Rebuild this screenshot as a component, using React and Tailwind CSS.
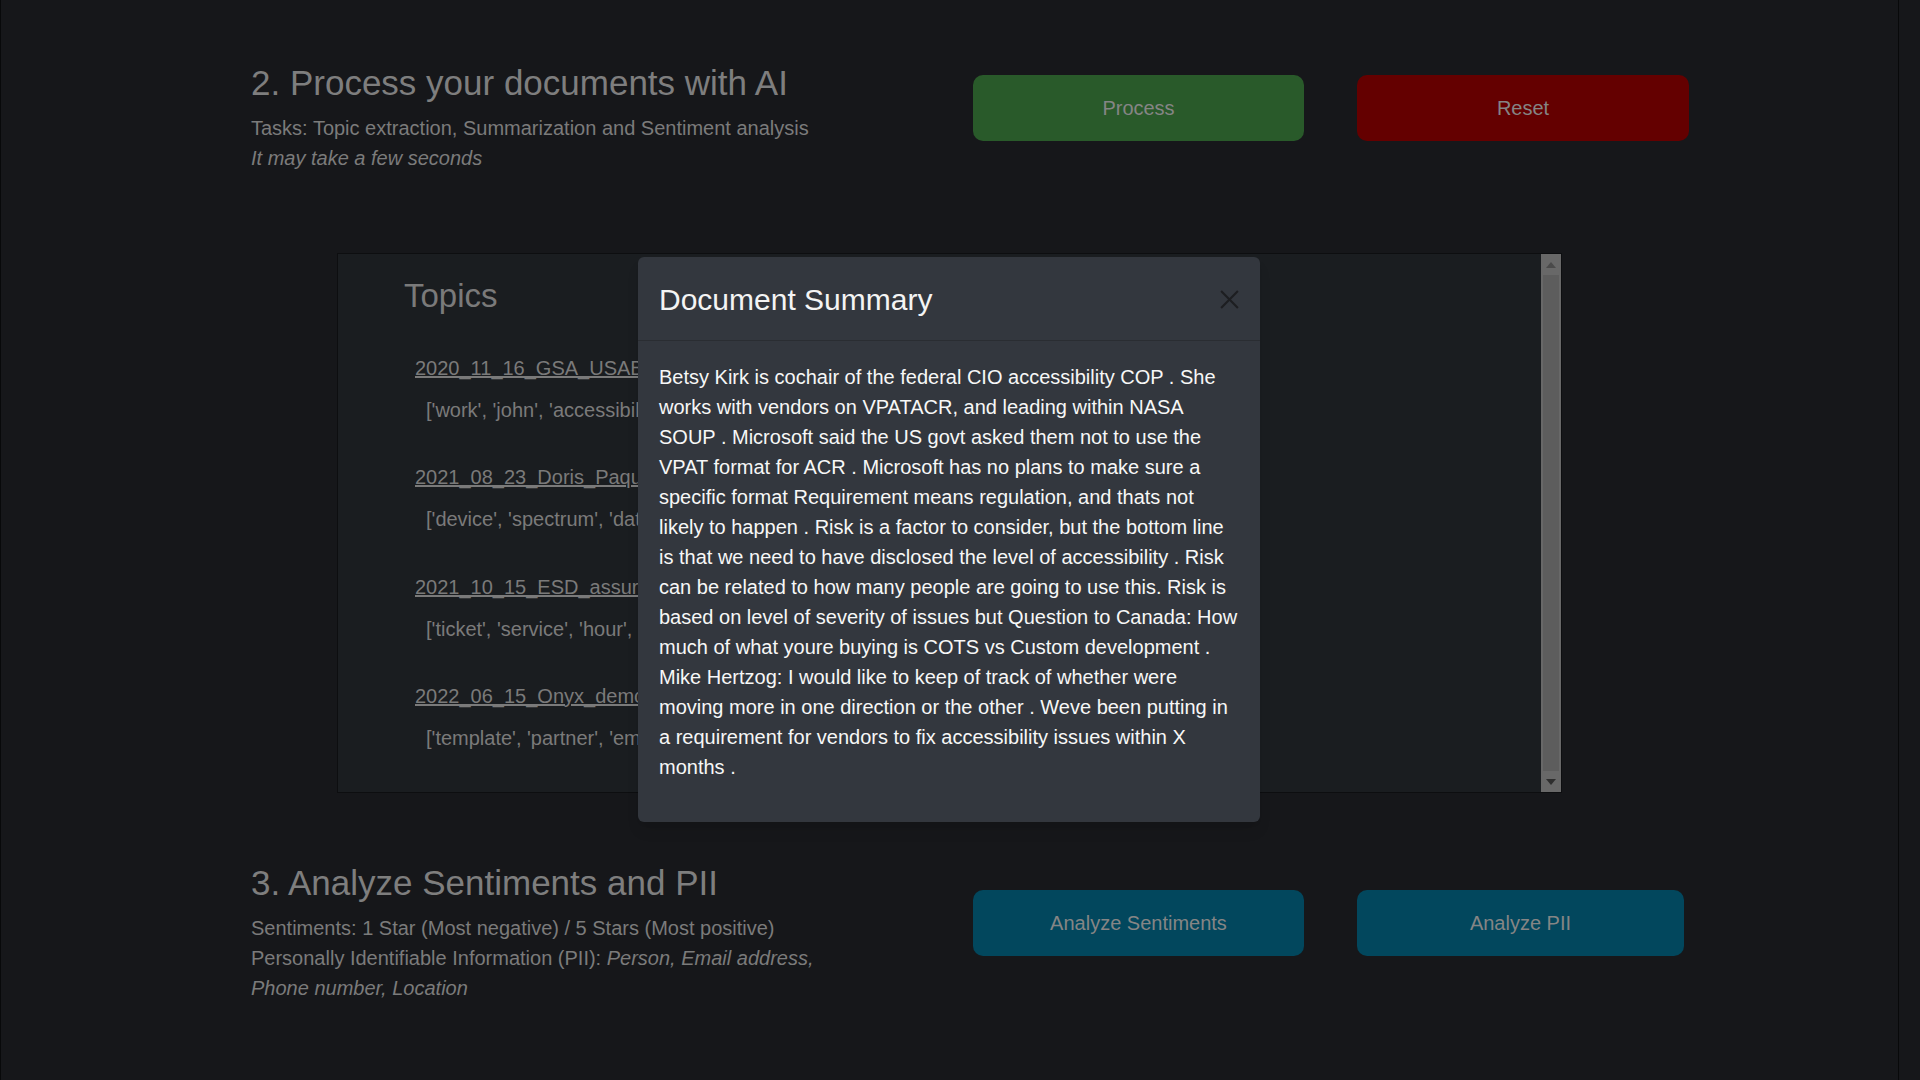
import React from 'react';

const topics = [
    { file: '2020_11_16_GSA_USABILITY.txt', words: "['work', 'john', 'accessibility', 'product', 'team']" },
    { file: '2021_08_23_Doris_Paquette.txt', words: "['device', 'spectrum', 'data', 'wireless', 'band']" },
    { file: '2021_10_15_ESD_assurance.txt', words: "['ticket', 'service', 'hour', 'desk', 'call']" },
    { file: '2022_06_15_Onyx_demo.txt', words: "['template', 'partner', 'email', 'contract', 'form']" },
];

const summary = "Betsy Kirk is cochair of the federal CIO accessibility COP . She works with vendors on VPATACR, and leading within NASA SOUP . Microsoft said the US govt asked them not to use the VPAT format for ACR . Microsoft has no plans to make sure a specific format Requirement means regulation, and thats not likely to happen . Risk is a factor to consider, but the bottom line is that we need to have disclosed the level of accessibility . Risk can be related to how many people are going to use this. Risk is based on level of severity of issues but Question to Canada: How much of what youre buying is COTS vs Custom development . Mike Hertzog: I would like to keep of track of whether were moving more in one direction or the other . Weve been putting in a requirement for vendors to fix accessibility issues within X months .";

const ActionButton = ({ color, width, children }) => (
    <button className={`h-[66px] ${width} ${color} rounded-[10px] text-[20px] text-[#858585]`}>
        {children}
    </button>
);

const Scrollbar = () => (
    <div className="w-[20px] h-full bg-[#686868] flex flex-col items-center">
        <div className="h-[21px] flex items-center justify-center">
            <svg width="10" height="6" viewBox="0 0 10 6"><polygon points="5,0 10,6 0,6" fill="#4a4a4a" /></svg>
        </div>
        <div className="flex-1 w-[16px] bg-[#5d5d5d]"></div>
        <div className="h-[21px] flex items-center justify-center">
            <svg width="10" height="6" viewBox="0 0 10 6"><polygon points="0,0 10,0 5,6" fill="#2e2e2e" /></svg>
        </div>
    </div>
);

export default function App() {
    return (
        <div className="relative w-[1920px] h-[1080px] overflow-hidden bg-[#16171a] font-['Liberation_Sans',Arial,sans-serif]">
            <div className="w-[1899px] h-full border-l border-r border-[#08090a] pl-[250px]">

                {/* 2. Process */}
                <div className="flex items-start pt-[62px]">
                    <div className="w-[722px]">
                        <h2 className="text-[35px] leading-[42px] text-[#7e7e7e]">2. Process your documents with AI</h2>
                        <p className="mt-[9px] text-[20px] leading-[30px] text-[#7b7b7b]">Tasks: Topic extraction, Summarization and Sentiment analysis</p>
                        <p className="text-[20px] leading-[30px] text-[#7b7b7b] italic">It may take a few seconds</p>
                    </div>
                    <div className="flex gap-[53px] mt-[13px]">
                        <ActionButton color="bg-[#295a2a]" width="w-[331px]">Process</ActionButton>
                        <ActionButton color="bg-[#640000]" width="w-[332px]">Reset</ActionButton>
                    </div>
                </div>

                {/* Topics panel (the part under the modal is clipped) */}
                <div className="mt-[80px] ml-[86px] w-[1225px] h-[540px] flex bg-[#1a1d20] border border-[#0d0e10]">
                    <div className="w-[300px] pl-[66px] pt-[22px] overflow-hidden whitespace-nowrap">
                        <h3 className="text-[33px] leading-[40px] text-[#7a7a7a]">Topics</h3>
                        <div className="mt-[37px] flex flex-col gap-[37.3px]">
                            {topics.map(t => (
                                <div key={t.file}>
                                    <a className="block pl-[11px] text-[20px] leading-[30px] text-[#7a7a7a] underline">{t.file}</a>
                                    <p className="mt-[12px] pl-[22px] text-[20px] leading-[30px] text-[#7a7a7a]">{t.words}</p>
                                </div>
                            ))}
                        </div>
                    </div>
                    <div className="flex-1"></div>
                    <Scrollbar />
                </div>

                {/* 3. Analyze */}
                <div className="flex items-start mt-[69px]">
                    <div className="w-[722px]">
                        <h2 className="text-[35px] leading-[42px] text-[#7e7e7e]">3. Analyze Sentiments and PII</h2>
                        <div className="mt-[9px] w-[580px] text-[20px] leading-[30px] text-[#7b7b7b]">
                            <p>Sentiments: 1 Star (Most negative) / 5 Stars (Most positive)</p>
                            <p>Personally Identifiable Information (PII): <span className="italic">Person, Email address, Phone number, Location</span></p>
                        </div>
                    </div>
                    <div className="flex gap-[53px] mt-[28px]">
                        <ActionButton color="bg-[#02475d]" width="w-[331px]">Analyze Sentiments</ActionButton>
                        <ActionButton color="bg-[#02475d]" width="w-[327px]">Analyze PII</ActionButton>
                    </div>
                </div>
            </div>

            {/* Modal */}
            <div className="absolute left-[638px] top-[257px] w-[622px] h-[565px] bg-[#33373e] rounded-[6px] shadow-lg">
                <div className="h-[84px] pt-[2px] flex items-center justify-between pl-[21px] pr-[20px] border-b border-[#2a2d32]">
                    <h4 className="text-[30px] leading-[36px] text-[#f4f4f4]">Document Summary</h4>
                    <svg width="21" height="21" viewBox="0 0 20 20">
                        <path d="M2 2 L18 18 M18 2 L2 18" stroke="#1d1e21" strokeWidth="2" />
                    </svg>
                </div>
                <div className="pt-[21px] px-[21px]">
                    <p className="text-[20px] leading-[30px] text-[#f7f7f7]">{summary}</p>
                </div>
            </div>
        </div>
    );
}
